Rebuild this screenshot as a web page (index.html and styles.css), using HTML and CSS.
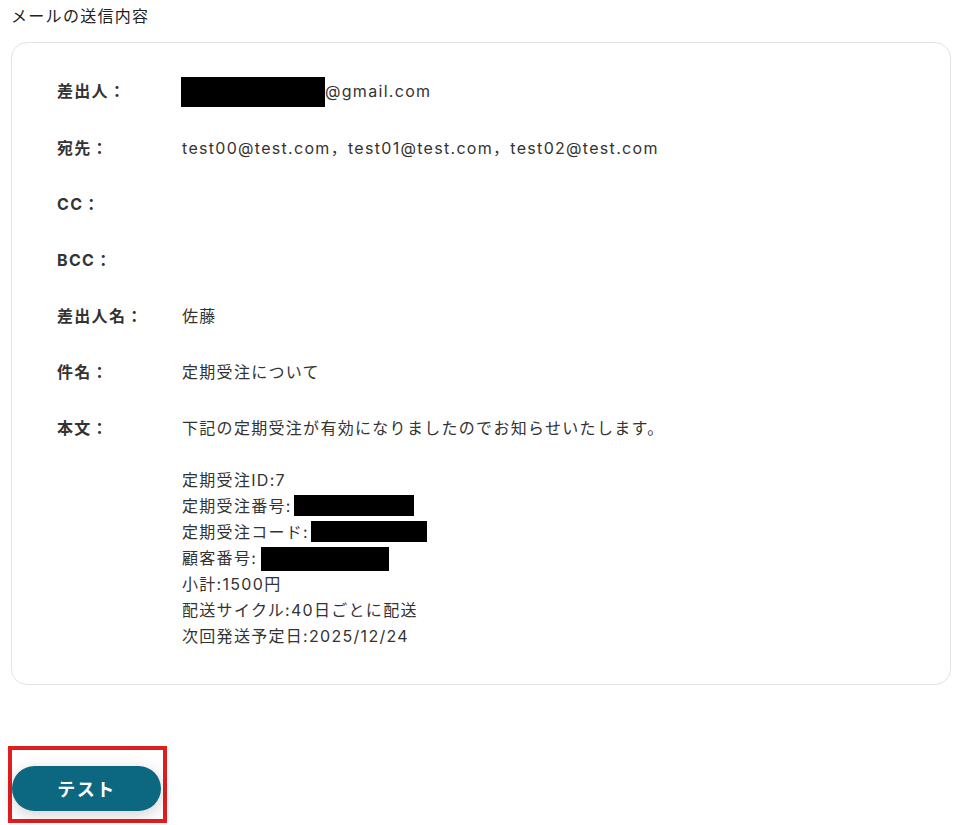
FILE: index.html
```html
<!DOCTYPE html>
<html lang="ja">
<head>
  <meta charset="utf-8">
  <title>メールの送信内容</title>
  <link rel="stylesheet" href="styles.css">
</head>
<body>
  <h2 class="title">メールの送信内容</h2>

  <div class="mail-card">
    <div class="row">
      <div class="label">差出人：</div>
      <div class="value"><span class="mask mask-from"></span>@gmail.com</div>
    </div>
    <div class="row">
      <div class="label">宛先：</div>
      <div class="value">test00@test.com，test01@test.com，test02@test.com</div>
    </div>
    <div class="row">
      <div class="label">CC：</div>
      <div class="value"></div>
    </div>
    <div class="row">
      <div class="label">BCC：</div>
      <div class="value"></div>
    </div>
    <div class="row">
      <div class="label">差出人名：</div>
      <div class="value">佐藤</div>
    </div>
    <div class="row">
      <div class="label">件名：</div>
      <div class="value">定期受注について</div>
    </div>
    <div class="row">
      <div class="label">本文：</div>
      <div class="value">下記の定期受注が有効になりましたのでお知らせいたします。<br>
<br>
定期受注ID:7<br>
定期受注番号:<span class="mask mask-a"></span><br>
定期受注コード:<span class="mask mask-b"></span><br>
顧客番号:<span class="mask mask-c"></span><br>
小計:1500円<br>
配送サイクル:40日ごとに配送<br>
次回発送予定日:2025/12/24</div>
    </div>
  </div>

  <div class="highlight">
    <button class="test-btn">テスト</button>
  </div>
</body>
</html>
```

FILE: styles.css
```css
body {
  margin: 0;
  padding: 3px 0 0 11px;
  font-family: "Inter", "Noto Sans CJK JP", sans-serif;
  font-size: 16px;
  letter-spacing: 1.3px;
  color: #333;
  background: #fff;
}

.title {
  margin: 0 0 13px 0;
  font-size: 16px;
  font-weight: normal;
  line-height: 26px;
  color: #222;
}

.mail-card {
  width: 940px;
  box-sizing: border-box;
  border: 1px solid #e3e3e3;
  border-radius: 16px;
  padding: 35px 20px 35px 45px;
  display: flex;
  flex-direction: column;
  gap: 30px;
}

.row {
  display: flex;
  line-height: 26px;
  min-height: 26px;
}

.label {
  width: 125px;
  flex-shrink: 0;
  font-weight: bold;
}

.value {
  flex: 1;
}

.mask {
  display: inline-block;
  background: #000;
  vertical-align: middle;
}

.mask-from {
  width: 144px;
  height: 30px;
  margin: -4px 0 -2px -1px;
}

.mask-a {
  width: 120px;
  height: 21px;
  margin: -4px 0 0 2px;
}

.mask-b {
  width: 116px;
  height: 21px;
  margin: -4px 0 0 2px;
}

.mask-c {
  width: 128px;
  height: 24px;
  margin: -4px 0 -4px 4px;
}

.highlight {
  display: inline-block;
  margin: 61px 0 0 -3px;
  border: 4px solid #e01e1e;
  padding: 16px 2px 8px 0;
}

.test-btn {
  display: block;
  width: 149px;
  height: 45px;
  border: none;
  border-radius: 23px;
  background: #0c6880;
  color: #fff;
  font-family: "Inter", "Noto Sans CJK JP", sans-serif;
  font-size: 18px;
  font-weight: bold;
  letter-spacing: 1.5px;
  box-shadow: 0 4px 16px rgba(0, 0, 0, 0.18);
}
```
